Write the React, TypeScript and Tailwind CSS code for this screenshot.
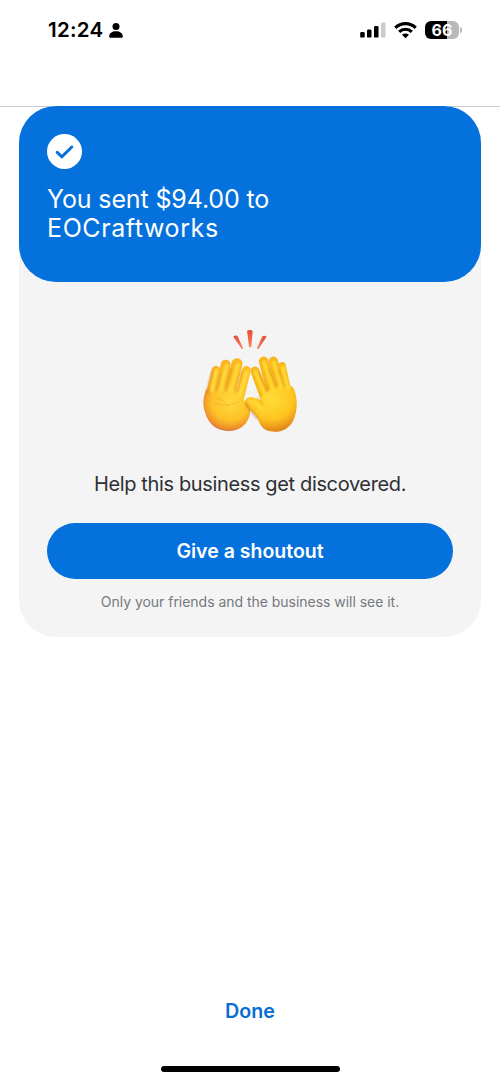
import type { ReactNode } from 'react'

function StatusBar() {
  return (
    <header className="flex h-[106px] items-start justify-between pt-[19px] pr-[38px] pl-[48px] text-black">
      <div className="flex h-[22px] items-center gap-[6px]">
        <span className="text-[20.5px] leading-[22px] font-semibold tracking-[0.25px]">12:24</span>
        <svg width="14" height="15" viewBox="0 0 14 15" fill="currentColor">
          <circle cx="7" cy="3.6" r="3.5" />
          <path d="M0.2 13.2C0.2 10.2 3.1 8.2 7 8.2s6.8 2 6.8 5c0 1-.6 1.5-1.6 1.5H1.8c-1 0-1.6-.5-1.6-1.5z" />
        </svg>
      </div>

      <div className="flex h-[22px] items-center">
        <svg width="26" height="17" viewBox="0 0 26 17" fill="currentColor">
          <rect x="0.2" y="10" width="4.5" height="5.6" rx="1.2" />
          <rect x="7" y="7.6" width="4.5" height="8" rx="1.2" />
          <rect x="14" y="4" width="4.5" height="11.6" rx="1.2" />
          <rect x="21" y="0.4" width="4.5" height="15.2" rx="1.2" fill="#cccccc" />
        </svg>
        <svg className="ml-[8px]" width="23" height="17" viewBox="0 0 23 17" fill="none" stroke="currentColor" strokeWidth="3.2">
          <path d="M1.3 5.8a14.7 14.7 0 0 1 20.4 0" />
          <path d="M5.2 9.8a9.1 9.1 0 0 1 12.6 0" />
          <path d="M11.5 16.2 8 12.8a5.1 5.1 0 0 1 7 0z" fill="currentColor" stroke="none" />
        </svg>
        <div className="ml-[8px] flex h-[18px] w-[34px] items-center justify-center rounded-[6px] bg-[linear-gradient(to_right,#000_66%,#b9b9b9_66%)]">
          <span className="text-[16px] leading-[18px] font-bold text-white">66</span>
        </div>
        <div className="ml-px h-[6px] w-[2px] rounded-r-full bg-[#b9b9b9]" />
      </div>
    </header>
  )
}

function RaisedHands() {
  return (
    <svg width="120" height="120" viewBox="0 0 360 360">
      <defs>
        <linearGradient id="leftFinger" gradientUnits="userSpaceOnUse" x1="55" y1="120" x2="180" y2="220">
          <stop offset="0" stopColor="#f8ae22" />
          <stop offset="1" stopColor="#ffc41f" />
        </linearGradient>
        <radialGradient id="leftPalm" cx="0.58" cy="0.35" r="0.68">
          <stop offset="0" stopColor="#ffdb3d" />
          <stop offset="0.6" stopColor="#fdc127" />
          <stop offset="0.87" stopColor="#ee9029" />
          <stop offset="1" stopColor="#cf6652" />
        </radialGradient>
        <radialGradient id="rightPalm" cx="0.5" cy="0.3" r="0.72">
          <stop offset="0" stopColor="#ffdc38" />
          <stop offset="0.6" stopColor="#fec51f" />
          <stop offset="1" stopColor="#df7f18" />
        </radialGradient>
        <linearGradient id="spark" x1="0" y1="0" x2="0" y2="1">
          <stop offset="0" stopColor="#e64b31" />
          <stop offset="1" stopColor="#fb8563" />
        </linearGradient>
        <filter id="shade" x="-20%" y="-20%" width="140%" height="140%">
          <feGaussianBlur stdDeviation="2.5" />
        </filter>
      </defs>

      <g fill="url(#spark)">
        <path d="M130 50q6-6 13-1l16 36q0 4-4 1z" />
        <path d="M171 32q8-4 17 0l-4 48q-4 4-7 0z" />
        <path d="M217 49q7-4 13 1l-24 36q-6 3-5-1z" />
      </g>

      {/* left hand */}
      <g fill="none" stroke="url(#leftFinger)" strokeLinecap="round">
        <path d="M78 150 59 228" strokeWidth="25" />
        <path d="M107 134 88 226" strokeWidth="30" />
        <path d="M141 131 118 226" strokeWidth="33" />
        <path d="M169 151 148 240" strokeWidth="26" />
      </g>
      <path
        d="M48 210c-9 22-10 44-4 63 9 36 32 57 67 60 37 2 63-20 69-52 3-20-2-31-17-38-2-21-21-36-47-40-26-5-54-3-68 7z"
        fill="url(#leftPalm)"
      />
      <g fill="none" strokeLinecap="round" filter="url(#shade)">
        <path d="M80 152 66 213M110 136 92 212M144 134 121 214M170 156 150 226" stroke="#ffdc3e" strokeWidth="11" />
        <path d="M91 160 78 212M123 145 106 212M155 155 139 215" stroke="#d77c0c" strokeWidth="4" opacity=".75" />
        <path d="M68 151 50 218" stroke="#dd7b2a" strokeWidth="5" opacity=".6" />
      </g>
      <path d="M78 235c17 2 28 11 36 25M72 249c26 9 50 9 72-3" fill="none" stroke="#e99c1b" strokeWidth="3" strokeLinecap="round" opacity=".4" />

      {/* right hand */}
      <g fill="none" stroke="#f9b51b" strokeLinecap="round">
        <path d="M195 153 224 232" strokeWidth="27" />
        <path d="M221 124 248 225" strokeWidth="29" />
        <path d="M250 123 275 216" strokeWidth="27" />
        <path d="M276 138 293 216" strokeWidth="23" />
      </g>
      <path
        d="M211 240c10-24 38-42 66-45 18-1 31 2 35 13 13 31 10 72-4 97-15 25-41 34-67 29-22-4-32-20-38-38-9-16-20-24-32-35-13-14-4-31 14-29 11 1 16 4 26 8z"
        fill="url(#rightPalm)"
      />
      <g fill="none" strokeLinecap="round" filter="url(#shade)">
        <path d="M196 155 223 220M222 127 249 209M251 126 275 205M278 141 293 206" stroke="#ffdc35" strokeWidth="11" />
        <path d="M207 159 233 214M237 145 259 202M266 149 284 201" stroke="#d57b08" strokeWidth="4" opacity=".75" />
        <path d="M177 243c17 3 29 14 39 26" stroke="#ffdc38" strokeWidth="9" />
        <path d="M168 250c4 16 24 27 34 46" stroke="#a95619" strokeWidth="4" opacity=".7" />
        <path d="M201 235c8 3 12 10 17 18" stroke="#d98b0f" strokeWidth="3" />
      </g>
    </svg>
  )
}

function PaymentCard({ children }: { children: ReactNode }) {
  return (
    <section className="mx-[19px] -mt-px h-[531px] rounded-[37px] bg-[#f4f4f5]">
      <div className="h-[176px] rounded-[37px] bg-[#0571dc] px-[28px] pt-[28px] text-white">
        <svg width="35" height="35" viewBox="0 0 35 35">
          <circle cx="17.5" cy="17.5" r="17.5" fill="white" />
          <path d="m10.2 18.4 4.5 4.4L24.8 13" fill="none" stroke="#0571dc" strokeWidth="3" strokeLinecap="round" strokeLinejoin="round" />
        </svg>
        <h1 className="mt-[16px] text-[25px] leading-[29px] font-normal whitespace-nowrap">
          <span className="block tracking-[-0.13px]">You sent $94.00 to</span>
          <span className="block tracking-[0.6px]">EOCraftworks</span>
        </h1>
      </div>
      {children}
    </section>
  )
}

export default function App() {
  return (
    <main className="flex h-[1081px] w-[500px] flex-col overflow-hidden bg-white font-['Inter',sans-serif]">
      <StatusBar />
      <div className="h-px shrink-0 bg-[#cccccc]" />

      <PaymentCard>
        <div className="flex flex-col items-center px-[28px] pt-[38px]">
          <RaisedHands />
          <p className="mt-[32px] text-[20px] leading-[24px] font-normal tracking-[-0.36px] whitespace-nowrap text-[#2e3034]">
            Help this business get discovered.
          </p>
          <button className="mt-[27px] h-[56px] w-full rounded-full bg-[#0571dc] pt-[2px] text-[19.5px] font-semibold text-white">
            Give a shoutout
          </button>
          <p className="mt-[13px] text-[14px] leading-[19px] tracking-[-0.03px] whitespace-nowrap text-[#76787e]">
            Only your friends and the business will see it.
          </p>
        </div>
      </PaymentCard>

      <footer className="mt-auto flex flex-col items-center pb-[9px]">
        <button className="mb-[43px] text-[19.7px] leading-[24px] font-semibold text-[#096dd0]">Done</button>
        <div className="h-[6px] w-[179px] rounded-full bg-black" />
      </footer>
    </main>
  )
}
